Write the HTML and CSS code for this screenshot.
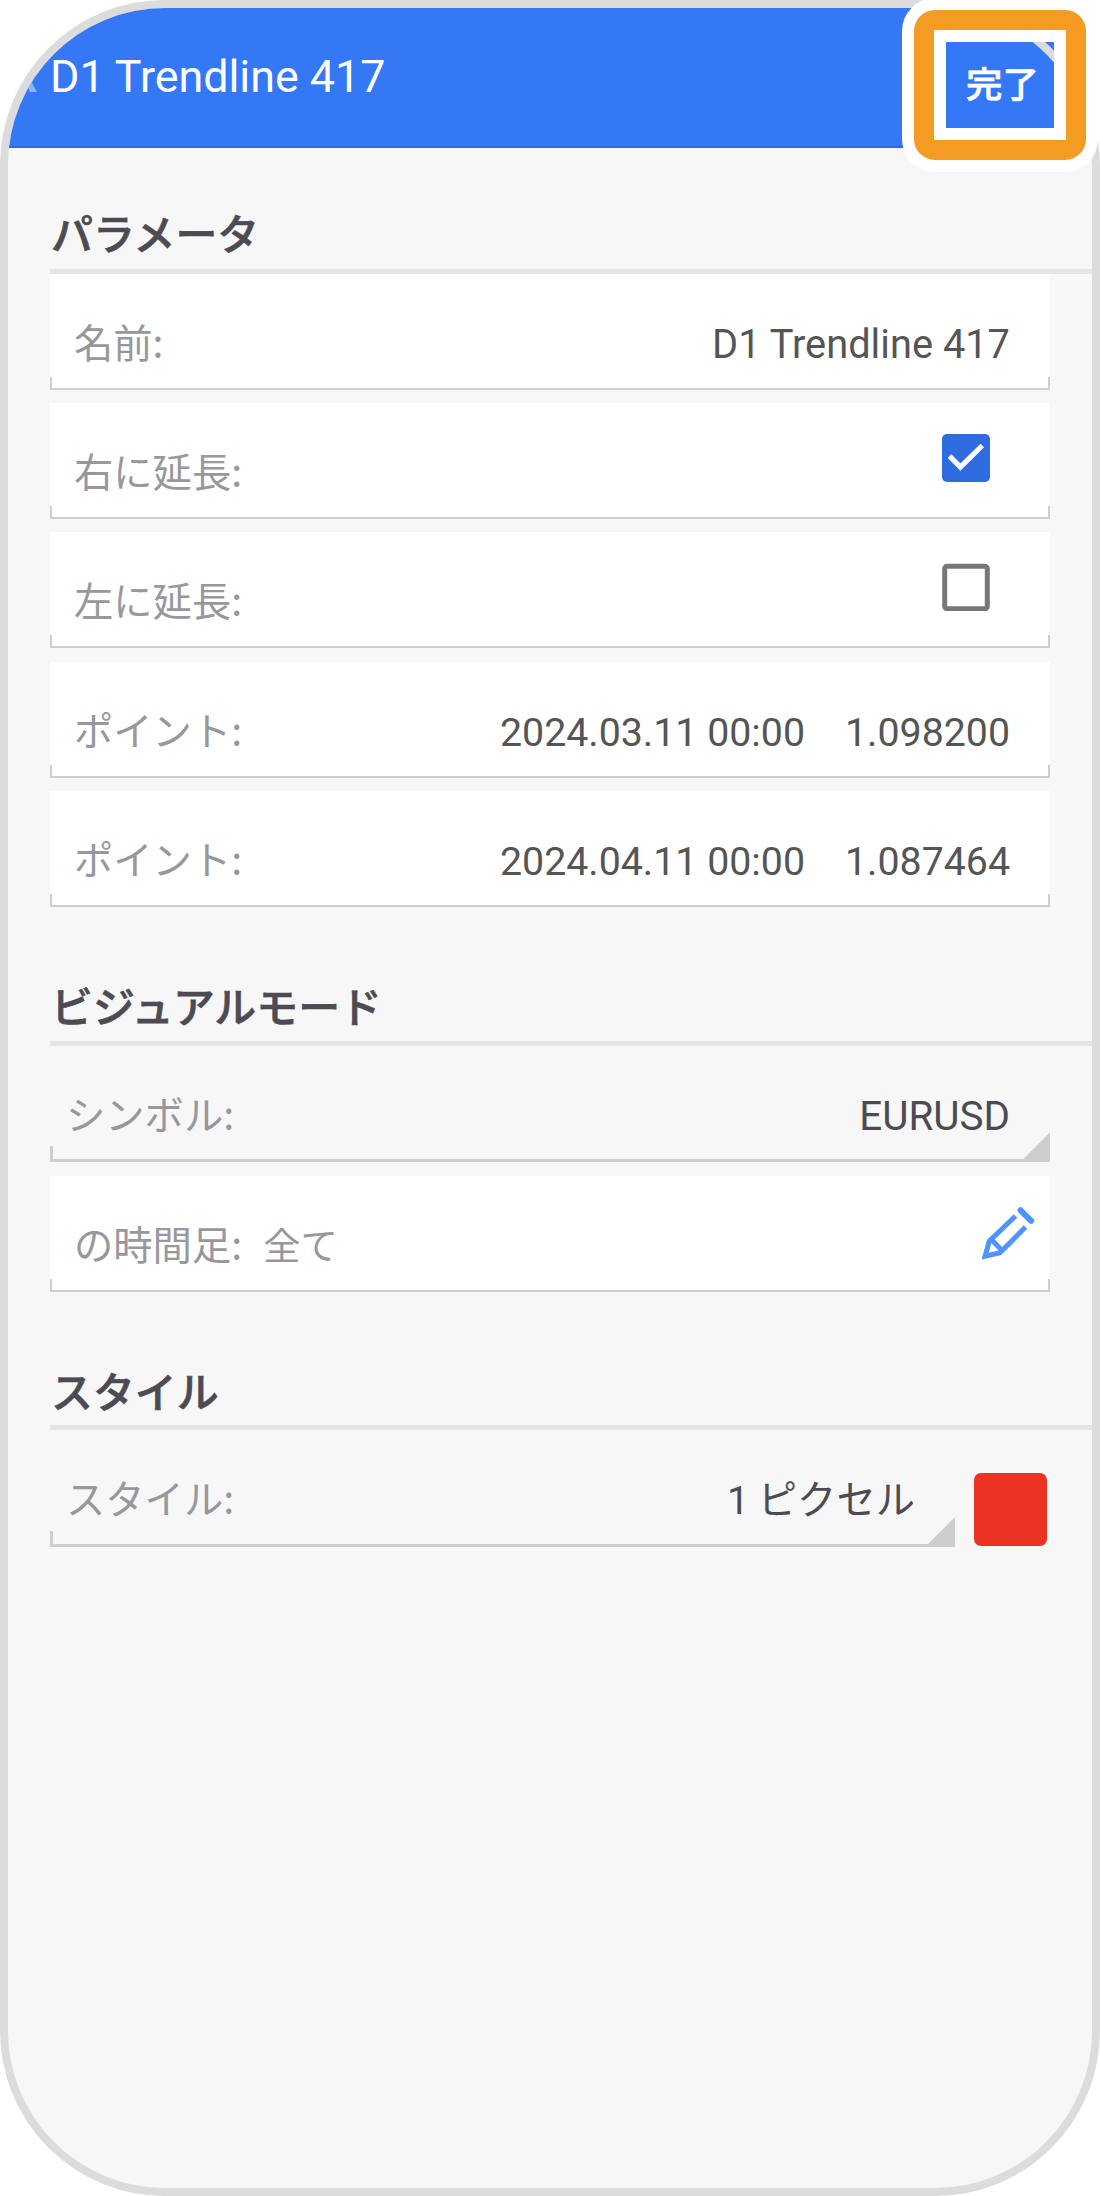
FILE: index.html
```html
<!DOCTYPE html>
<html lang="ja">
<head>
<meta charset="utf-8">
<title>D1 Trendline 417</title>
<link rel="stylesheet" href="styles.css">
</head>
<body>
<div class="phone">
  <header class="bar">
    <svg class="back" width="12" height="12" viewBox="0 0 12 12"><path d="M0 0H5L11 11H4Z" fill="#8ab6fb"/></svg>
    <h1 class="bar-title">D1 Trendline 417</h1>
  </header>
  <main class="content">
    <section class="group">
      <h2 class="heading">パラメータ</h2>
      <div class="rows">
        <div class="row"><span class="label">名前:</span><span class="value">D1 Trendline 417</span></div>
        <div class="row"><span class="label">右に延長:</span>
          <svg class="check" width="48" height="48" viewBox="0 0 48 48"><rect width="48" height="48" rx="5" fill="#2e6cdf"/><path d="M7.5 22.2L18.4 33L40.3 11.5" fill="none" stroke="#fff" stroke-width="5.2"/></svg>
        </div>
        <div class="row"><span class="label">左に延長:</span>
          <svg class="check" width="48" height="48" viewBox="0 0 48 48"><rect x="2.7" y="3.2" width="42.6" height="42.6" rx="2.5" fill="none" stroke="#777" stroke-width="5"/></svg>
        </div>
        <div class="row"><span class="label">ポイント:</span><span class="value date">2024.03.11 00:00</span><span class="value price">1.098200</span></div>
        <div class="row"><span class="label">ポイント:</span><span class="value date">2024.04.11 00:00</span><span class="value price">1.087464</span></div>
      </div>
    </section>
    <section class="group">
      <h2 class="heading">ビジュアルモード</h2>
      <div class="rows">
        <div class="row select"><span class="label">シンボル:</span><span class="value symbol">EURUSD</span></div>
        <div class="row"><span class="label">の時間足:</span><span class="label extra">全て</span>
          <svg class="pencil" width="54" height="54" viewBox="0 0 54 54" fill="none" stroke="#4f94fa" stroke-width="5"><path d="M33.5 9L7.3 34.2L3 49.3L18 45.8L43.5 20"/><path d="M9.5 32.5L20 43.5"/><path d="M38.6 3.3L49.2 13.8" stroke-width="6" stroke-linecap="round"/></svg>
        </div>
      </div>
    </section>
    <section class="group">
      <h2 class="heading">スタイル</h2>
      <div class="style-line">
        <div class="row select"><span class="label">スタイル:</span><span class="value width">1 ピクセル</span></div>
        <span class="swatch"></span>
      </div>
    </section>
  </main>
</div>
<div class="highlight">
  <div class="done">
    <svg class="arc" width="108" height="86" viewBox="0 0 108 86"><circle cx="-11" cy="123" r="161" fill="none" stroke="#dcdcdc" stroke-width="8"/></svg>
    <span class="done-text">完了</span>
  </div>
</div>
</body>
</html>
```

FILE: styles.css
```css
* { box-sizing: border-box; }
body {
  margin: 0;
  background: #fff;
  position: relative;
  width: 1100px;
  height: 2196px;
  overflow: hidden;
  font-family: Roboto, "Noto Sans CJK JP", sans-serif;
}
.phone {
  height: 2196px;
  border: 8px solid #dcdcdc;
  border-radius: 165px;
  background: #f7f7f7;
  overflow: hidden;
}
.bar {
  position: relative;
  height: 140px;
  padding: 39px 0 0 42px;
  background: #3478f6;
  border-bottom: 2px solid #2e6be0;
}
.back { position: absolute; left: 18px; top: 73px; }
.bar-title {
  margin: 0;
  font-size: 44.8px;
  line-height: 60px;
  font-weight: 400;
  color: #fff;
  white-space: nowrap;
}
.content { padding-left: 42px; }
.heading {
  margin: 0;
  height: 125.5px;
  padding: 54px 0 0 1px;
  font-family: "Noto Sans CJK JP", sans-serif;
  font-size: 41.9px;
  line-height: 60px;
  font-weight: 500;
  -webkit-text-stroke: .7px #4c4b53;
  color: #4c4b53;
  border-bottom: 5px solid #e5e5e5;
}
.group + .group .heading { height: 138.5px; padding-top: 68px; }
.rows { display: flex; flex-direction: column; gap: 13.4px; }
.row {
  position: relative;
  display: flex;
  align-items: baseline;
  width: 1000px;
  height: 116px;
  padding: 37px 40px 0 24px;
  background: #fff;
  border-bottom: 2px solid #cecece;
}
.row::before, .row::after {
  content: "";
  position: absolute;
  bottom: 0;
  width: 2px;
  height: 11px;
  background: #cecece;
}
.row::before { left: 0; }
.row::after { right: 0; }
.label {
  font-family: "Noto Sans CJK JP", sans-serif;
  font-size: 39.3px;
  line-height: 60px;
  color: #98989c;
  white-space: pre;
}
.extra { margin-left: 21px; font-size: 37.3px; }
.value {
  margin-left: auto;
  font-size: 39.8px;
  line-height: 60px;
  color: #555;
  white-space: nowrap;
}
.date, .price { font-size: 39.3px; }
.price { margin-left: 0; width: 205px; text-align: right; }
.check { position: absolute; right: 60px; top: 31px; }
.pencil { position: absolute; right: 14px; top: 31px; }
.select {
  height: 116.8px;
  padding-left: 16px;
  background: transparent;
  border-bottom-width: 3px;
}
.select .value { color: #4c4b53; }
.select .symbol { font-size: 40.4px; }
.select .width { font-size: 39.3px; word-spacing: -1px; }
.select::before { width: 3px; height: 13px; }
.select::after {
  width: 27px;
  height: 27px;
  clip-path: polygon(100% 0, 100% 100%, 0 100%);
}
.style-line { display: flex; align-items: flex-end; }
.style-line .row { width: 905px; }
.swatch {
  width: 73px;
  height: 73px;
  margin: 0 0 1px 19px;
  border-radius: 7px;
  background: #eb3323;
}
.highlight {
  position: absolute;
  left: 914px;
  top: 10px;
  width: 172px;
  height: 150px;
  border: 20px solid #f49b23;
  border-radius: 21px;
  background: #fff;
  box-shadow: 0 0 0 12px #fff;
  padding: 12px;
}
.done {
  position: relative;
  height: 86px;
  background: #3478f6;
  display: flex;
  padding: 11px 0 0 20px;
}
.arc { position: absolute; left: 0; top: 0; }
.done-text {
  font-family: "Noto Sans CJK JP", sans-serif;
  font-size: 36.5px;
  line-height: 60px;
  font-weight: 500;
  -webkit-text-stroke: .6px #fff;
  color: #fff;
}
```
